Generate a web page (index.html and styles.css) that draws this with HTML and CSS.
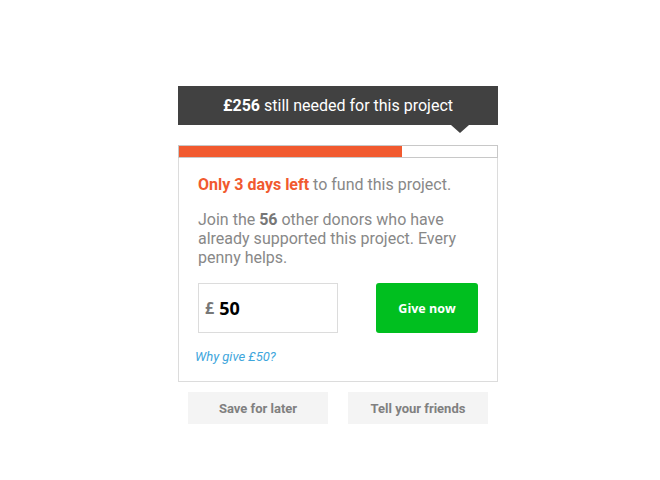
FILE: index.html
```html
<!DOCTYPE html>
<html>
<head>
<meta charset="utf-8">
<link rel="stylesheet" href="styles.css">
</head>
<body>
<div class="widget">
  <div class="tip"><b>£256</b> still needed for this project</div>
  <div class="bar"><div class="fill" style="width:70%"></div></div>
  <div class="card">
    <p class="deadline"><b>Only 3 days left</b> to fund this project.</p>
    <p class="join">Join the <b>56</b> other donors who have already supported this project. Every penny helps.</p>
    <div class="give">
      <div class="amount"><span class="cur">£</span><span class="val">50</span></div>
      <button class="go">Give now</button>
    </div>
    <a class="why" href="#">Why give £50?</a>
  </div>
  <div class="actions">
    <button class="sec">Save for later</button>
    <button class="sec">Tell your friends</button>
  </div>
</div>
</body>
</html>
```

FILE: styles.css
```css
html, body { margin: 0; padding: 0; background: #fff; }
body { font-family: Roboto, "Liberation Sans", sans-serif; }
.widget { width: 320px; margin-left: 178px; padding-top: 86px; }
.tip {
  position: relative;
  height: 39px;
  background: #414141;
  color: #fff;
  font-size: 16px;
  line-height: 39px;
  text-align: center;
  margin-bottom: 20px;
}
.tip b { font-weight: 700; }
.tip::after {
  content: "";
  position: absolute;
  left: 273px;
  top: 39px;
  border-left: 9px solid transparent;
  border-right: 9px solid transparent;
  border-top: 8px solid #414141;
}
.bar {
  height: 11px;
  border: 1px solid #c8c8c8;
  background: #fff;
}
.fill { height: 100%; background: #f15a2f; }
.card {
  border: 1px solid #dcdcdc;
  border-top: none;
  padding: 17px 19px 17px 19px;
  color: #888;
  font-size: 16px;
  line-height: 19px;
}
.card p { margin: 0; }
.deadline b { color: #f15a2f; font-weight: 700; }
.card .join { margin-top: 16px; }
.join b { color: #777; font-weight: 700; }
.give {
  display: flex;
  justify-content: space-between;
  margin-top: 16px;
}
.amount {
  box-sizing: border-box;
  width: 140px;
  height: 50px;
  border: 1px solid #dcdcdc;
  display: flex;
  align-items: center;
  gap: 5px;
  padding-left: 6px;
  font-family: "Open Sans", sans-serif;
  font-weight: 700;
}
.cur { color: #777; font-size: 16px; }
.val { color: #000; font-size: 18px; }
.go {
  width: 102px;
  height: 50px;
  border: none;
  border-radius: 3px;
  background: #00bf1f;
  color: #fff;
  font-family: "Open Sans", sans-serif;
  font-weight: 700;
  font-size: 12.5px;
  padding: 0;
}
.why {
  display: block;
  margin: 16px 0 0 -3px;
  font-size: 13px;
  line-height: 15px;
  font-style: italic;
  color: #3ea6dc;
  text-decoration: none;
}
.actions {
  display: flex;
  justify-content: center;
  gap: 20px;
  margin-top: 10px;
}
.sec {
  width: 140px;
  height: 32px;
  border: none;
  background: #f4f4f4;
  color: #808080;
  font-family: Roboto, sans-serif;
  font-weight: 700;
  font-size: 13px;
  padding: 0;
}
```
